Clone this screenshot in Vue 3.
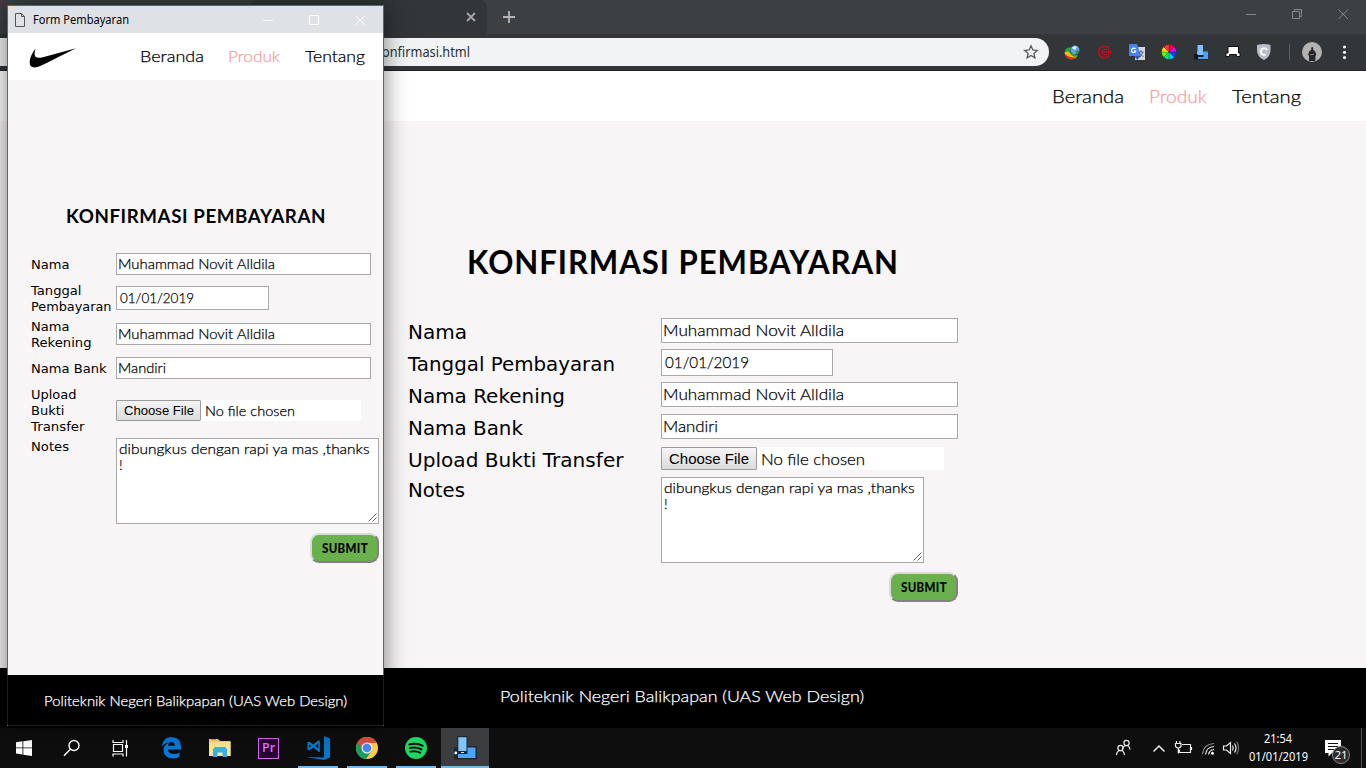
<script setup>
const vFit = {
  mounted(el, { value }) {
    const natural = el.getBoundingClientRect().width
    el.style.transform = `scaleX(${value / natural})`
    el.style.marginRight = `${value - natural}px`
  }
}

const navLarge = [
  { label: 'Beranda', w: 72 },
  { label: 'Produk', w: 58, active: true },
  { label: 'Tentang', w: 69 }
]
const navSmall = [
  { label: 'Beranda', w: 64 },
  { label: 'Produk', w: 52, active: true },
  { label: 'Tentang', w: 60 }
]

const largeForm = {
  title: 432,
  rows: [
    { labels: [['Nama', 59]], kind: 'text', value: 'Muhammad Novit Alldila', w: 181 },
    { labels: [['Tanggal Pembayaran', 207]], kind: 'date', value: '01/01/2019', w: 84 },
    { labels: [['Nama Rekening', 157]], kind: 'text', value: 'Muhammad Novit Alldila', w: 181 },
    { labels: [['Nama Bank', 115]], kind: 'text', value: 'Mandiri', w: 55 },
    { labels: [['Upload Bukti Transfer', 215.5]], kind: 'file', w: 104, choose: 80 },
    { labels: [['Notes', 57]], kind: 'notes', w: 250.5 }
  ]
}
const smallForm = {
  title: 260,
  rows: [
    { labels: [['Nama', 38.5]], kind: 'text', value: 'Muhammad Novit Alldila', w: 157 },
    { labels: [['Tanggal', 50.5], ['Pembayaran', 80.5]], kind: 'date', value: '01/01/2019', w: 74 },
    { labels: [['Nama', 38.5], ['Rekening', 60.5]], kind: 'text', value: 'Muhammad Novit Alldila', w: 157 },
    { labels: [['Nama Bank', 75.5]], kind: 'text', value: 'Mandiri', w: 48 },
    { labels: [['Upload', 45.5], ['Bukti', 33.5], ['Transfer', 53.5]], kind: 'file', w: 90, choose: 70 },
    { labels: [['Notes', 38]], kind: 'notes', w: 250.5 }
  ]
}
const pages = [
  { size: 'large', nav: navLarge, form: largeForm, foot: 364 },
  { size: 'small', nav: navSmall, form: smallForm, foot: 303 }
]
</script>

<template>
  <div class="desktop">
    <section v-for="p in pages" :key="p.size" :class="['window', p.size]">
      <template v-if="p.size === 'large'">
        <div class="tabstrip">
          <div class="tab">
            <svg width="10" height="10" viewBox="0 0 10 10"><path d="M1 1l8 8M9 1l-8 8" stroke="#a4a6a8" stroke-width="1.8" /></svg>
          </div>
          <svg class="plus" width="12" height="12" viewBox="0 0 12 12"><path d="M6 0v12M0 6h12" stroke="#b4b6b8" stroke-width="1.8" /></svg>
          <svg class="controls" width="104" height="12" viewBox="0 0 104 12" fill="none" stroke="#85888a">
            <path d="M1 6.5h10M47.500 3.500h7v7h-7zM49.500 3.500v-2h7v7h-2M93.500 1.500l9.500 9.500M103 1.500l-9.500 9.500" />
          </svg>
        </div>
        <div class="toolbar">
          <div class="address">
            <span v-fit="88" class="url">onfirmasi.html</span>
            <svg width="16" height="16" viewBox="0 0 16 16"><path d="M8 1.800l1.800 4.200 4.500.4-3.400 3 1 4.400L8 11.500l-3.900 2.300 1-4.400-3.400-3 4.500-.4z" fill="none" stroke="#55585b" stroke-width="1.300" /></svg>
          </div>
          <svg class="extensions" width="317" height="36" viewBox="1049 34 317 36">
            <g>
              <path d="M1065 52q-.5-5 6-4.500l-1 4q2 4 8 3.500-2 4.500-7 4.500-6-1-6-7.500z" fill="#27a33b" />
              <path d="M1064.500 52.500q4-2.500 6 1.500 2 3.500 7 2.500-4 3-9 .5-3.500-1.500-4-4.500z" fill="#f7b90b" />
              <path d="M1065 54.500q5 3.500 11 3-3 2.500-7 1.500-3.500-1.500-4-4.500z" fill="#e52b1c" />
              <circle cx="1075" cy="50" r="4.500" fill="#5f9fdc" /><path d="M1072 48q2-3 5-1l-2 3z" fill="#e6f5ff" />
              <path d="M1076 51l3-.5q0 3-3 3.500z" fill="#2c8d34" />
            </g>
            <g fill="none" stroke="#c4101a">
              <path d="M1109 48.500a5.800 5.800 0 1 0 0 7" stroke-width="1.600" /><path d="M1107 50a2.700 2.700 0 1 0 0 4" stroke-width="1.200" /><path d="M1104 52h7.500M1108.500 49.500v5M1110.500 50.500v3" stroke-width="1.200" />
            </g>
            <g>
              <path d="M1137 47h8v13h-10z" fill="#d5d7da" /><path d="M1129 44h8l4 12h-12z" fill="#4484ee" /><path d="M1135 56h6l-4 4z" fill="#2a58b5" />
              <path d="M1135.500 49a2.200 2.200 0 1 0 .3 2h-2" fill="none" stroke="#fff" stroke-width="1.200" /><path d="M1138.500 52h5M1141 50v2M1143 52l-3 5M1139.500 53l4 4" fill="none" stroke="#667" />
            </g>
            <g stroke="#222" stroke-width=".3">
              <path d="M1169 52v-7.500a7.500 7.500 0 0 1 5.300 2.200z" fill="#f04" /><path d="M1169 52l5.300-5.300a7.500 7.500 0 0 1 2.200 5.300z" fill="#e0f" />
              <path d="M1169 52h7.500a7.500 7.500 0 0 1-2.200 5.300z" fill="#23f" /><path d="M1169 52l5.300 5.300a7.500 7.500 0 0 1-5.300 2.200z" fill="#0cf" />
              <path d="M1169 52v7.500a7.500 7.500 0 0 1-5.300-2.200z" fill="#0e6" /><path d="M1169 52l-5.300 5.300a7.500 7.500 0 0 1-2.200-5.300z" fill="#6f0" />
              <path d="M1169 52h-7.500a7.500 7.500 0 0 1 2.200-5.300z" fill="#fd0" /><path d="M1169 52l-5.300-5.300a7.500 7.500 0 0 1 5.300-2.200z" fill="#f33" />
            </g>
            <g><path d="M1197 51.500h11v7.500h-11z" fill="#4aa2fa" /><path d="M1194 54h4v5h-4z" fill="#15171a" /><path d="M1197.500 45h5.500v10h-5.500z" fill="#80c2ff" /><path d="M1196.500 56h7" stroke="#111" stroke-width="1.800" /><path d="M1194.500 59.500h14" stroke="#202225" /></g>
            <path d="M1228 46.500h10.500v6.500h1.500v3.500h-3.500v-2h-7v2h-3.500v-3.500h2z" fill="#fff" stroke="#111" />
            <path d="M1257 45q7-2 13.500 0v5q0 7-6.500 10-7-3-7-10z" fill="#b7bec8" /><path d="M1265.500 54.500a3.300 3.300 0 1 1 1.500-4.500" fill="none" stroke="#fff" stroke-width="2" />
            <path d="M1289.500 44v16" stroke="#5d6063" />
            <circle cx="1312" cy="52" r="10" fill="#b4b2b1" /><path d="M1309 61v-5l-.8-1q.3-4 3-5v-2q1-2 2 0v2q2.700 1 3 5l-.8 1v5z" fill="#25262b" /><path d="M1310 55l4-1" stroke="#a8786c" />
            <g fill="#f1f1f1"><circle cx="1344.500" cy="47" r="1.600" /><circle cx="1344.500" cy="52.300" r="1.600" /><circle cx="1344.500" cy="57.600" r="1.600" /></g>
          </svg>
        </div>
      </template>
      <div v-else class="titlebar">
        <svg width="10" height="14" viewBox="0 0 10 14" fill="none" stroke="#555"><path d="M.5.5h6l3 3v10h-9zM6.500.5v3h3" /></svg>
        <span v-fit="96">Form Pembayaran</span>
        <svg class="controls" width="104" height="12" viewBox="0 0 104 12" fill="none" stroke="#fff"><path d="M1 6.500h10M47.500 1.500h9v9h-9zM93.500 1.500l9.500 9.500M103 1.500l-9.500 9.500" /></svg>
      </div>

      <nav>
        <svg v-if="p.size === 'small'" class="swoosh" width="48" height="20" viewBox="0 0 48 20"><path d="M47 .3L13.500 17Q4.500 21.500 1.300 17.500-1.200 11 6.500 .5 4.500 7 6.800 9 9 10.500 14 9.200z" /></svg>
        <a v-for="n in p.nav" :key="n.label" v-fit="n.w" :class="{ active: n.active }">{{ n.label }}</a>
      </nav>

      <main>
        <h1><span v-fit="p.form.title">KONFIRMASI PEMBAYARAN</span></h1>
        <div class="form">
          <div v-for="(r, i) in p.form.rows" :key="i" :class="['row', 'r' + i]">
            <div class="label"><div v-for="l in r.labels" :key="l[0]"><span v-fit="l[1]">{{ l[0] }}</span></div></div>
            <div v-if="r.kind === 'file'" class="file">
              <div class="choose"><span v-fit="r.choose">Choose File</span></div>
              <span v-fit="r.w">No file chosen</span>
            </div>
            <div v-else-if="r.kind === 'notes'" class="notes">
              <span v-fit="r.w">dibungkus dengan rapi ya mas ,thanks</span><br><span>!</span>
              <svg class="grip" width="9" height="9" viewBox="0 0 9 9"><path d="M.5 8.500l8-8M4.500 8.500l4-4" stroke="#666" /></svg>
            </div>
            <div v-else :class="['field', r.kind]"><span v-fit="r.w">{{ r.value }}</span></div>
          </div>
          <div class="submit"><span v-fit="46">SUBMIT</span></div>
        </div>
      </main>
      <footer><span v-fit="p.foot">Politeknik Negeri Balikpapan (UAS Web Design)</span></footer>
    </section>

    <div class="taskbar">
      <div class="task narrow"><svg width="16" height="16" viewBox="0 0 16 16" fill="#fff"><path d="M0 2.200l6.500-.9v6.200H0zM7.300 1.200L16 0v7.500H7.300zM0 8.300h6.500v6.200L0 13.600zM7.300 8.300H16V16l-8.700-1.300z" /></svg></div>
      <div class="task narrow"><svg width="18" height="18" viewBox="0 0 18 18" fill="none" stroke="#fff" stroke-width="1.400"><circle cx="11" cy="6.500" r="5" /><path d="M7.300 10.200L1 16.800" /></svg></div>
      <div class="task third"><svg width="17" height="17" viewBox="0 0 17 17" fill="none" stroke="#fff" stroke-width="1.200"><path d="M1.500 4.500h9v7h-9zM1 0v2.500h10V0M1 16.500V14h10v2.500M14.500 0v16.500" /><path d="M13 5h3v3h-3z" fill="#fff" stroke="none" /></svg></div>
      <div class="task"><svg width="20" height="22" viewBox="0 0 20 22"><path d="M.5 9.500Q2 0 10.500 0 20 .3 20 9.500v3H7q.5 4.500 6 4.500 3 0 5.500-1.500v4Q16 21.500 12 21.500 3 21.500 2.500 13 2.500 8 8 5.500 3.500 6 .5 9.500zM7 8.700h6.800Q13.500 4.800 10.500 5 7.500 5.200 7 8.700z" fill="#0879d9" /></svg></div>
      <div class="task"><svg width="22" height="20" viewBox="0 0 22 20"><path d="M0 1h9l2 2h10.500v15H0z" fill="#f7d46d" /><path d="M0 4h21.500v14H0z" fill="#ffe694" /><path d="M2 1h5v1H2z" fill="#e59b21" /><path d="M4 18v-7l2-2h10l2 2v8h-4.500v-4.500h-5V19H4z" fill="#38b2e6" /></svg></div>
      <div class="task"><div class="premiere">Pr</div></div>
      <div class="task open"><svg width="24" height="24" viewBox="0 0 24 24"><path d="M18 0l6 2.500v19L18 24 0 21l18 .5z" fill="#0878cb" /><path d="M2.500 6.500L13 14.500M2.500 13.500L13 5.500" fill="none" stroke="#0878cb" stroke-width="2.400" /><path d="M2.200 6v8M13 4.500v11.500" stroke="#0878cb" stroke-width="1.600" /></svg></div>
      <div class="task open"><svg width="22" height="22" viewBox="0 0 22 22"><circle cx="11" cy="11" r="11" fill="#ffce44" /><path d="M11 11L1.470 5.500A11 11 0 0 0 10 21.950l6-8.500z" fill="#18a05e" /><path d="M11 6h9.800A11 11 0 0 0 1.700 5.200L6.500 13z" fill="#dd5144" /><circle cx="11" cy="11" r="5.500" fill="#f1f1f1" /><circle cx="11" cy="11" r="4.300" fill="#4688f4" /></svg></div>
      <div class="task open"><svg width="22" height="22" viewBox="0 0 22 22"><circle cx="11" cy="11" r="11" fill="#1ed760" /><path d="M4.300 7.500q7.500-2 13.500 1.300M4.800 11.200q6.500-1.700 11.700 1.200M5.300 14.600q5.500-1.200 9.700 1.100" fill="none" stroke="#111" stroke-width="1.900" stroke-linecap="round" /></svg></div>
      <div class="task open current"><svg width="24" height="24" viewBox="0 0 24 24"><path d="M1 11.500h4V10h19v13.500H1z" fill="#22252a" /><path d="M5 11.500h17.500V22H5z" fill="#4aa5ff" /><path d="M4.300 0h10.200v18H4.300z" fill="#22252a" /><path d="M5.300 1.200h8.200v13.800H5.300z" fill="#7fc4fb" /><circle cx="2.800" cy="17" r="1.400" fill="#fff" /><path d="M8 16.500h3" stroke="#ddd" /></svg></div>

      <svg class="tray" width="125" height="24" viewBox="1115 736 125 24" fill="none" stroke="#eee" stroke-width="1.200">
        <circle cx="1126.500" cy="743" r="2.600" /><path d="M1122.500 749q1-3.500 4-3.500t3.500 4" />
        <circle cx="1120.500" cy="748" r="2.600" /><path d="M1116.500 755q.5-4.500 4-4.500t4 4.500" />
        <path d="M1153.500 751.500l5.500-5.500 5.500 5.500" stroke-width="1.500" />
        <path d="M1182 744.500h8.500v8h-11v-3M1175.500 743.500h5.500v3q-2.700 3-5.500 0zM1176.500 741v2.500M1180 741v2.500M1178.300 748.500v5M1191.500 747v3" />
        <g stroke="#999"><path d="M1202.500 754q1-10 11.500-10.500" /><path d="M1205.500 754.500q1-7.500 8.500-8" stroke="#ddd" /><path d="M1208.500 754.500q1-4.500 5.500-5" stroke="#eee" /></g><circle cx="1212.500" cy="753.300" r="1.500" fill="#fff" stroke="none" />
        <path d="M1223.500 746h3l4-3.500v11l-4-3.500h-3zM1232.500 745.500q1.500 2.500 0 5M1234.500 743.500q3 4.500 0 9" /><path d="M1236.800 741.800q3.500 6.200 0 12.400" stroke="#777" />
      </svg>
      <div class="clock"><span v-fit="28">21:54</span><span v-fit="59">01/01/2019</span></div>
      <div class="notif">
        <svg width="17" height="17" viewBox="0 0 17 17"><path d="M0 0h16v13H7l-3.500 3.500V13H0z" fill="#fff" /><path d="M3 3.500h10M3 6.500h10M3 9.500h7" stroke="#111" stroke-width="1.200" /></svg>
        <div class="badge">21</div>
      </div>
      <div class="peek"></div>
    </div>
  </div>
</template>

<style>
html, body { overflow: hidden; }
</style>

<style scoped>
.desktop { position: relative; width: 1366px; height: 768px; overflow: hidden; display: flex; flex-direction: column; background: #000; font-family: Lato, sans-serif; font-weight: 300; color: #000; }
.desktop * { box-sizing: border-box; }
.desktop span, nav a { display: inline-block; white-space: nowrap; transform-origin: left center; }
svg { display: block; flex: none; }
.window { display: flex; flex-direction: column; background: #f7f5f6; }
.large { height: 728px; }
.small { position: absolute; left: 7px; top: 5px; width: 377px; height: 721px; border: 1px solid #656565; border-top-color: #1c77c8; box-shadow: 0 1px 22px rgba(0, 0, 0, .5); }

.tabstrip { height: 34px; flex: none; display: flex; align-items: flex-start; background: #3c4043; }
.tab { width: 237px; height: 34px; margin-left: 250px; padding: 12px 11px 0 0; display: flex; justify-content: flex-end; background: #323639; border-radius: 8px 8px 0 0; }
.plus { margin: 11px 0 0 16px; }
.tabstrip .controls { margin: 8px 17px 0 auto; }
.toolbar { height: 37px; flex: none; display: flex; background: #323639; border-bottom: 1px solid #202225; }
.address { width: 1049px; height: 28px; margin-top: 4px; padding: 0 10px 0 382px; display: flex; align-items: center; justify-content: space-between; background: #f1f3f4; border-radius: 0 14px 14px 0; }
.url { font: 14px/20px "Noto Sans", sans-serif; color: #2c3034; }
.titlebar { height: 27px; flex: none; display: flex; align-items: center; padding: 0 17px 0 7px; background: #dee1e6; font: 12px/18px "Noto Sans", sans-serif; }
.titlebar span { margin-left: 8px; }
.titlebar .controls { margin-left: auto; }

nav { flex: none; display: flex; align-items: center; background: #fff; }
nav a, .field, .file > span, .notes, footer { -webkit-text-stroke: .25px currentColor; }
nav .active { color: #f3a0a3; }
.large nav { height: 50px; justify-content: flex-end; padding: 0 65px 0 0; font-size: 17.5px; gap: 25px; }
.small nav { height: 47px; padding: 0 0 1px 21px; font-size: 15.5px; gap: 24.5px; }
.swoosh { margin-right: 38px; margin-top: 3px; }

main { flex: 1; }
h1 { margin: 0; font-weight: 700; letter-spacing: .03em; }
.large h1 { padding: 120px 0 0 467px; font-size: 33px; line-height: 40px; height: 197px; }
.small h1 { padding: 124px 0 0 58px; font-size: 19.5px; line-height: 24px; height: 173px; }
.form { display: flex; flex-direction: column; }
.row { display: flex; align-items: flex-start; }
.label { flex: none; font-family: "DejaVu Sans", sans-serif; font-weight: 400; }
.large .form { width: 958px; padding-left: 408px; }
.small .form { width: 371px; padding-left: 23px; }
.large .label { width: 253px; font-size: 20px; line-height: 26px; }
.small .label { width: 85px; font-size: 13px; line-height: 16px; }

.large .r0 { height: 31px; }
.large .r1 { height: 33px; }
.large .r2 { height: 32px; }
.large .r3 { height: 33px; }
.large .r4 { height: 30px; }
.large .r5 { height: 95px; }
.large .r0 .label, .large .r2 .label, .large .r3 .label { margin-top: 1px; }
.large .r1 .label { margin-top: 2px; }
.small .r0 { height: 33px; }
.small .r1 { height: 37px; }
.small .r2 { height: 34px; }
.small .r3 { height: 43px; }
.small .r4 { height: 38px; }
.small .r5 { height: 95px; }
.small .r0 .label, .small .r3 .label { margin-top: 4px; }
.small .r1 .label { margin-top: -3px; }
.small .r2 .label { margin-top: -4px; }
.small .r4 .label { margin-top: -13px; }
.small .r5 .label { margin-top: 1px; }

.field { border: 1px solid #a9a9a9; background: #fff; padding: 0 0 1px 1px; display: flex; align-items: center; }
.large .field { width: 297px; height: 25px; padding-bottom: 2px; font-size: 16px; }
.small .field { width: 255px; height: 22px; font-size: 14px; }
.field.date { padding-left: 2.5px; }
.large .date { width: 172px; height: 27px; }
.small .date { width: 153px; height: 24px; }
.file { background: #fff; display: flex; align-items: center; gap: 4px; }
.large .file { width: 283px; height: 23px; font-size: 16px; }
.small .file { width: 245px; height: 21px; font-size: 14px; }
.choose { display: flex; align-items: center; justify-content: center; height: 100%; border: 1px solid #9b9b9b; border-radius: 1px; background: linear-gradient(#f5f5f5, #dcdcdc); font-family: "Liberation Sans", sans-serif; font-weight: 400; }
.large .choose { width: 96px; font-size: 15px; }
.small .choose { width: 85px; font-size: 13px; }
.notes { position: relative; width: 263px; height: 86px; border: 1px solid #a9a9a9; background: #fff; padding: 2px; font-size: 14px; line-height: 16px; }
.grip { position: absolute; right: 1px; bottom: 1px; }
.submit { align-self: flex-end; width: 69px; height: 30px; display: flex; align-items: center; justify-content: center; border: 2px solid; border-radius: 9px; border-color: #dcdadc #858085 #858085 #dcdadc; background: #6ab04c; font-size: 12.5px; font-weight: 900; letter-spacing: .03em; }

footer { flex: none; background: #000; color: #fff; }
.large footer { height: 60px; padding: 18px 0 0 500px; font-size: 16.500px; line-height: 20px; }
.small footer { height: 50px; padding: 17px 0 0 35.5px; font-size: 13.800px; line-height: 18px; box-shadow: -1px 0 #1c1c1c, 1px 0 #1c1c1c, 0 1px #1c1c1c; }

.taskbar { height: 40px; flex: none; display: flex; align-items: center; background: #0e0e0e; color: #fff; }
.task { width: 49px; height: 40px; padding-right: 2px; display: flex; align-items: center; justify-content: center; }
.task.narrow { width: 48px; padding-right: 0; }
.task.third { width: 51px; padding-right: 3px; }
.task.open { background: linear-gradient(#76b9ed, #76b9ed) 4px 38px / 40px 2px no-repeat; }
.task.current { width: 48px; padding-right: 0; background: linear-gradient(#76b9ed, #76b9ed) 0 38px / 48px 2px no-repeat #3b3d3f; }
.premiere { width: 21px; height: 21px; border: 1.500px solid #d968f0; background: #2a0034; color: #e07bf5; font: 600 12.5px/17px "Open Sans", sans-serif; text-align: center; }
.tray { margin-left: 626px; }
.clock { width: 58px; margin-left: 9px; display: flex; flex-direction: column; align-items: center; font: 12px/18px "Noto Sans", sans-serif; }
.notif { position: relative; margin-left: 18px; }
.badge { position: absolute; left: 7px; top: 6px; width: 18px; height: 18px; border: 1px solid #888; border-radius: 50%; background: #2b2b2b; font: 11.5px/15px "Noto Sans", sans-serif; text-align: center; }
.peek { width: 1px; height: 40px; margin-left: auto; margin-right: 4px; background: #555; }
</style>
